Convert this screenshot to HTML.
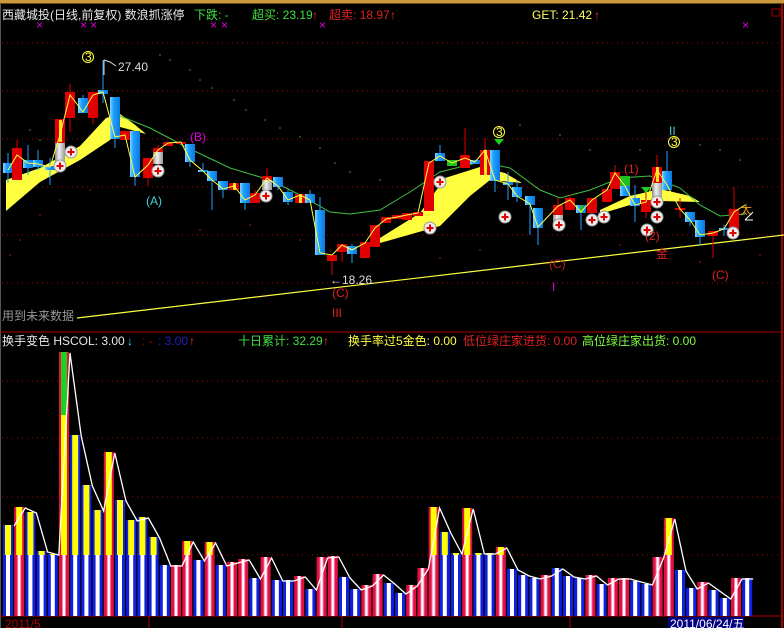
<!DOCTYPE html>
<html><head><meta charset="utf-8"><style>
html,body{margin:0;padding:0;background:#000;width:784px;height:628px;overflow:hidden}
svg{display:block}
text{font-family:"Liberation Sans","Noto Sans CJK SC",sans-serif;font-size:12px}
</style></head><body>
<svg width="784" height="628" viewBox="0 0 784 628" xmlns="http://www.w3.org/2000/svg">
<defs>
<linearGradient id="bl" x1="0" x2="1" y1="0" y2="0"><stop offset="0" stop-color="#7fd8ff"/><stop offset="0.35" stop-color="#1ea0ff"/><stop offset="1" stop-color="#0a78e0"/></linearGradient>
<linearGradient id="gr" x1="0" x2="1"><stop offset="0" stop-color="#888"/><stop offset="0.4" stop-color="#f0f0f0"/><stop offset="1" stop-color="#999"/></linearGradient>
</defs>
<rect width="784" height="628" fill="#000"/>
<rect x="0" y="0" width="784" height="3" fill="#c89a3c"/>
<rect x="0" y="3" width="784" height="1" fill="#6a4a10"/>
<line x1="782" y1="4" x2="782" y2="628" stroke="#a00000" stroke-width="2"/>
<line x1="0.5" y1="4" x2="0.5" y2="628" stroke="#555"/>
<g stroke="#b00000" stroke-width="1" stroke-dasharray="1,4">
<line x1="2" y1="43" x2="780" y2="43"/><line x1="2" y1="91" x2="780" y2="91"/><line x1="2" y1="139" x2="780" y2="139"/><line x1="2" y1="187" x2="780" y2="187"/><line x1="2" y1="235" x2="780" y2="235"/><line x1="2" y1="283" x2="780" y2="283"/>
<line x1="2" y1="381" x2="780" y2="381"/><line x1="2" y1="438" x2="780" y2="438"/><line x1="2" y1="497" x2="780" y2="497"/><line x1="2" y1="555" x2="780" y2="555"/>
</g>
<line x1="0" y1="332" x2="782" y2="332" stroke="#b00000"/>
<line x1="0" y1="616" x2="782" y2="616" stroke="#b00000"/>
<g stroke="#b00000"><line x1="149" y1="616" x2="149" y2="628"/><line x1="342" y1="616" x2="342" y2="628"/><line x1="570" y1="616" x2="570" y2="628"/></g>
<rect x="668" y="617" width="76" height="11" fill="#000080"/>
<text x="670" y="628" fill="#fff" font-size="11">2011/06/24/五</text>
<text x="5" y="628" fill="#b00000" font-size="11">2011/5</text>
<text x="2" y="19" fill="#e8e8e8">西藏城投(日线,前复权) 数浪抓涨停</text>
<text x="194" y="19" fill="#40e040">下跌: -</text>
<text x="252" y="19" fill="#40e040">超买: 23.19</text>
<text x="312" y="19" fill="#ff3030">↑</text>
<text x="329" y="19" fill="#e02020">超卖: 18.97</text>
<text x="390" y="19" fill="#ff3030">↑</text>
<text x="532" y="19" fill="#ffff60">GET: 21.42</text>
<text x="594" y="19" fill="#ff3030">↑</text>
<rect x="772" y="9" width="8" height="7" fill="none" stroke="#a00000"/>
<g fill="#e000e0" font-size="9"><text x="36" y="29">×</text><text x="80" y="29">×</text><text x="90" y="29">×</text><text x="210" y="29">×</text><text x="221" y="29">×</text><text x="319" y="29">×</text><text x="742" y="29">×</text></g>
<g fill="#ffff40">
<polygon points="6,180 40,168 80,146 106,118 120,114 134,124 146,134 120,127 110,140 80,160 40,182 6,211"/>
<polygon points="380,238 420,213 445,178 480,167 505,173 522,183 490,180 470,196 440,226 380,243"/>
<polygon points="600,210 630,196 660,189 690,196 700,202 660,201 630,205 600,214"/>
</g>
<line x1="77" y1="318" x2="784" y2="235" stroke="#ffff40" stroke-width="1.2"/>
<polyline fill="none" stroke="#40c040" stroke-width="1" points="120,116 150,128 188,148 230,168 270,180 300,195 330,212 350,214 380,210 410,192 440,172 480,162 510,168 540,190 560,198 590,190 620,178 650,176 680,188 700,205 720,216 745,214"/>
<g fill="#30a030"><circle cx="160" cy="55" r="0.8"/><circle cx="170" cy="60" r="0.8"/><circle cx="190" cy="70" r="0.8"/><circle cx="200" cy="80" r="0.8"/><circle cx="212" cy="88" r="0.8"/><circle cx="234" cy="100" r="0.8"/><circle cx="246" cy="110" r="0.8"/><circle cx="265" cy="120" r="0.8"/><circle cx="280" cy="128" r="0.8"/><circle cx="300" cy="137" r="0.8"/><circle cx="320" cy="148" r="0.8"/><circle cx="335" cy="163" r="0.8"/><circle cx="350" cy="172" r="0.8"/><circle cx="380" cy="180" r="0.8"/><circle cx="520" cy="125" r="0.8"/><circle cx="560" cy="135" r="0.8"/><circle cx="590" cy="150" r="0.8"/><circle cx="640" cy="150" r="0.8"/><circle cx="700" cy="145" r="0.8"/><circle cx="720" cy="150" r="0.8"/><circle cx="740" cy="160" r="0.8"/><circle cx="40" cy="140" r="0.8"/><circle cx="30" cy="130" r="0.8"/></g>
<g fill="#b02020"><circle cx="90" cy="190" r="0.8"/><circle cx="60" cy="200" r="0.8"/><circle cx="40" cy="215" r="0.8"/><circle cx="20" cy="240" r="0.8"/><circle cx="10" cy="255" r="0.8"/><circle cx="200" cy="230" r="0.8"/><circle cx="250" cy="225" r="0.8"/><circle cx="300" cy="240" r="0.8"/><circle cx="440" cy="258" r="0.8"/><circle cx="480" cy="250" r="0.8"/><circle cx="620" cy="245" r="0.8"/><circle cx="700" cy="262" r="0.8"/><circle cx="760" cy="255" r="0.8"/></g>
<g stroke-width="1">
<g stroke="#1ea0ff">
<line x1="8" y1="153" x2="8" y2="183"/><line x1="28" y1="145" x2="28" y2="175"/><line x1="38" y1="150" x2="38" y2="170"/><line x1="50" y1="158" x2="50" y2="185"/><line x1="83" y1="95" x2="83" y2="113"/><line x1="103" y1="60" x2="103" y2="103"/><line x1="115" y1="97" x2="115" y2="148"/><line x1="135" y1="131" x2="135" y2="186"/><line x1="190" y1="144" x2="190" y2="167"/><line x1="203" y1="163" x2="203" y2="172"/><line x1="212" y1="171" x2="212" y2="210"/><line x1="223" y1="181" x2="223" y2="198"/><line x1="245" y1="183" x2="245" y2="210"/><line x1="278" y1="177" x2="278" y2="190"/><line x1="288" y1="188" x2="288" y2="205"/><line x1="310" y1="190" x2="310" y2="203"/><line x1="320" y1="197" x2="320" y2="255"/><line x1="352" y1="244" x2="352" y2="263"/><line x1="440" y1="145" x2="440" y2="161"/><line x1="495" y1="150" x2="495" y2="192"/><line x1="508" y1="172" x2="508" y2="200"/><line x1="517" y1="180" x2="517" y2="202"/><line x1="530" y1="196" x2="530" y2="235"/><line x1="538" y1="208" x2="538" y2="245"/><line x1="581" y1="205" x2="581" y2="230"/><line x1="635" y1="185" x2="635" y2="222"/><line x1="667" y1="151" x2="667" y2="190"/><line x1="690" y1="212" x2="690" y2="226"/><line x1="700" y1="220" x2="700" y2="246"/><line x1="724" y1="225" x2="724" y2="236"/>
</g>
<g stroke="#e00000">
<line x1="17" y1="140" x2="17" y2="180"/><line x1="70" y1="84" x2="70" y2="132"/><line x1="93" y1="92" x2="93" y2="124"/><line x1="148" y1="158" x2="148" y2="186"/><line x1="158" y1="145" x2="158" y2="165"/><line x1="255" y1="190" x2="255" y2="203"/><line x1="267" y1="168" x2="267" y2="190"/><line x1="332" y1="255" x2="332" y2="275"/><line x1="342" y1="244" x2="342" y2="262"/><line x1="465" y1="128" x2="465" y2="168"/><line x1="485" y1="138" x2="485" y2="175"/><line x1="558" y1="198" x2="558" y2="229"/><line x1="570" y1="195" x2="570" y2="210"/><line x1="615" y1="165" x2="615" y2="189"/><line x1="646" y1="192" x2="646" y2="218"/><line x1="657" y1="155" x2="657" y2="197"/><line x1="680" y1="198" x2="680" y2="218"/><line x1="713" y1="231" x2="713" y2="258"/><line x1="734" y1="187" x2="734" y2="233"/>
</g>
</g>
<g fill="url(#bl)">
<rect x="3" y="163" width="10" height="10"/><rect x="23" y="160" width="10" height="8"/><rect x="33" y="160" width="10" height="7"/><rect x="45" y="166" width="10" height="4"/><rect x="78" y="98" width="10" height="15"/><rect x="98" y="90" width="10" height="4"/><rect x="110" y="97" width="10" height="42"/><rect x="130" y="131" width="10" height="46"/><rect x="185" y="144" width="10" height="18"/><rect x="198" y="170" width="10" height="2"/><rect x="207" y="171" width="10" height="10"/><rect x="218" y="181" width="10" height="9"/><rect x="240" y="183" width="10" height="20"/><rect x="273" y="177" width="10" height="10"/><rect x="283" y="192" width="10" height="10"/><rect x="305" y="194" width="10" height="9"/><rect x="315" y="210" width="10" height="45"/><rect x="347" y="246" width="10" height="8"/><rect x="435" y="153" width="10" height="8"/><rect x="470" y="160" width="10" height="4"/><rect x="490" y="150" width="10" height="31"/><rect x="503" y="182" width="10" height="3"/><rect x="512" y="187" width="10" height="10"/><rect x="525" y="196" width="10" height="9"/><rect x="533" y="208" width="10" height="20"/><rect x="576" y="205" width="10" height="8"/><rect x="620" y="186" width="10" height="10"/><rect x="630" y="198" width="10" height="8"/><rect x="662" y="171" width="10" height="19"/><rect x="685" y="212" width="10" height="10"/><rect x="695" y="220" width="10" height="17"/><rect x="719" y="228" width="10" height="2"/>
</g>
<g fill="#e00000">
<rect x="12" y="148" width="10" height="32"/><rect x="55" y="119" width="10" height="44"/><rect x="65" y="92" width="10" height="26"/><rect x="88" y="92" width="10" height="26"/><rect x="120" y="131" width="10" height="9"/><rect x="143" y="158" width="10" height="20"/><rect x="153" y="148" width="10" height="12"/><rect x="163" y="142" width="10" height="4"/><rect x="176" y="142" width="10" height="2"/><rect x="229" y="183" width="10" height="7"/><rect x="250" y="193" width="10" height="10"/><rect x="262" y="176" width="10" height="12"/><rect x="295" y="194" width="10" height="9"/><rect x="327" y="255" width="10" height="6"/><rect x="337" y="244" width="10" height="8"/><rect x="360" y="242" width="10" height="16"/><rect x="370" y="225" width="10" height="22"/><rect x="381" y="217" width="10" height="6"/><rect x="392" y="215" width="10" height="4"/><rect x="402" y="213" width="10" height="7"/><rect x="413" y="212" width="10" height="4"/><rect x="424" y="161" width="10" height="50"/><rect x="460" y="155" width="10" height="13"/><rect x="480" y="150" width="10" height="25"/><rect x="553" y="205" width="10" height="12"/><rect x="565" y="198" width="10" height="12"/><rect x="587" y="198" width="10" height="15"/><rect x="602" y="189" width="10" height="13"/><rect x="610" y="172" width="10" height="17"/><rect x="641" y="200" width="10" height="12"/><rect x="652" y="167" width="10" height="16"/><rect x="675" y="208" width="10" height="2"/><rect x="708" y="231" width="10" height="5"/><rect x="729" y="209" width="10" height="24"/>
</g>
<g fill="url(#gr)"><rect x="55" y="143" width="10" height="22"/><rect x="153" y="152" width="10" height="12"/><rect x="262" y="180" width="10" height="10"/><rect x="553" y="215" width="10" height="14"/><rect x="652" y="183" width="10" height="14"/></g>
<g fill="#ffe020"><rect x="59" y="120" width="3" height="22"/><rect x="233" y="183" width="3" height="7"/><rect x="299" y="194" width="3" height="9"/><rect x="484" y="150" width="3" height="25"/><rect x="656" y="167" width="3" height="15"/></g>
<g fill="#20c020"><rect x="620" y="176" width="10" height="10"/><rect x="447" y="160" width="10" height="6"/><rect x="580" y="205" width="3" height="8"/></g>
<polyline fill="none" stroke="#ffff40" stroke-width="1" points="8,170 17,155 28,163 38,164 50,167 60,135 70,95 83,112 93,95 103,92 115,137 125,135 135,177 148,165 158,150 168,143 181,142 190,160 203,171 212,180 223,189 234,186 245,200 255,195 267,178 278,186 288,200 300,195 310,200 320,253 332,255 342,245 352,250 365,243 375,228 386,219 397,217 407,215 418,213 429,163 440,156 452,163 465,158 475,162 485,150 495,180 508,184 517,196 530,204 538,227 558,206 570,200 581,212 592,200 607,190 615,173 625,186 635,205 646,202 657,170 667,185 680,209 690,220 700,235 713,233 724,229 734,212 745,205"/>
<g>
<g transform="translate(60,166)"><circle r="6" fill="#eee" stroke="#999"/><path d="M-3.5,0H3.5M0,-3.5V3.5" stroke="#e00000" stroke-width="2"/></g>
<g transform="translate(71,152)"><circle r="6" fill="#eee" stroke="#999"/><path d="M-3.5,0H3.5M0,-3.5V3.5" stroke="#e00000" stroke-width="2"/></g>
<g transform="translate(158,171)"><circle r="6" fill="#eee" stroke="#999"/><path d="M-3.5,0H3.5M0,-3.5V3.5" stroke="#e00000" stroke-width="2"/></g>
<g transform="translate(266,196)"><circle r="6" fill="#eee" stroke="#999"/><path d="M-3.5,0H3.5M0,-3.5V3.5" stroke="#e00000" stroke-width="2"/></g>
<g transform="translate(430,228)"><circle r="6" fill="#eee" stroke="#999"/><path d="M-3.5,0H3.5M0,-3.5V3.5" stroke="#e00000" stroke-width="2"/></g>
<g transform="translate(440,182)"><circle r="6" fill="#eee" stroke="#999"/><path d="M-3.5,0H3.5M0,-3.5V3.5" stroke="#e00000" stroke-width="2"/></g>
<g transform="translate(505,217)"><circle r="6" fill="#eee" stroke="#999"/><path d="M-3.5,0H3.5M0,-3.5V3.5" stroke="#e00000" stroke-width="2"/></g>
<g transform="translate(559,225)"><circle r="6" fill="#eee" stroke="#999"/><path d="M-3.5,0H3.5M0,-3.5V3.5" stroke="#e00000" stroke-width="2"/></g>
<g transform="translate(592,220)"><circle r="6" fill="#eee" stroke="#999"/><path d="M-3.5,0H3.5M0,-3.5V3.5" stroke="#e00000" stroke-width="2"/></g>
<g transform="translate(604,217)"><circle r="6" fill="#eee" stroke="#999"/><path d="M-3.5,0H3.5M0,-3.5V3.5" stroke="#e00000" stroke-width="2"/></g>
<g transform="translate(647,230)"><circle r="6" fill="#eee" stroke="#999"/><path d="M-3.5,0H3.5M0,-3.5V3.5" stroke="#e00000" stroke-width="2"/></g>
<g transform="translate(657,217)"><circle r="6" fill="#eee" stroke="#999"/><path d="M-3.5,0H3.5M0,-3.5V3.5" stroke="#e00000" stroke-width="2"/></g>
<g transform="translate(657,202)"><circle r="6" fill="#eee" stroke="#999"/><path d="M-3.5,0H3.5M0,-3.5V3.5" stroke="#e00000" stroke-width="2"/></g>
<g transform="translate(733,233)"><circle r="6" fill="#eee" stroke="#999"/><path d="M-3.5,0H3.5M0,-3.5V3.5" stroke="#e00000" stroke-width="2"/></g>
</g>
<circle cx="88" cy="57" r="5.5" fill="none" stroke="#ffff40"/><text x="85" y="61" fill="#ffff40" font-size="9">3</text>
<path d="M104,60 L104,75 M104,60 L110,62 L116,66" stroke="#ddd" fill="none"/>
<text x="118" y="71" fill="#ddd">27.40</text>
<text x="190" y="141" fill="#e000e0">(B)</text>
<text x="146" y="205" fill="#40d0e0">(A)</text>
<text x="330" y="284" fill="#ddd">←18.26</text>
<text x="332" y="297" fill="#e02020">(C)</text>
<text x="332" y="317" fill="#e02020">III</text>
<text x="2" y="320" fill="#999">用到未来数据</text>
<text x="549" y="268" fill="#c02020">(C)</text>
<text x="552" y="291" fill="#e000e0">I</text>
<circle cx="499" cy="132" r="5.5" fill="none" stroke="#ffff40"/><text x="496" y="136" fill="#ffff40" font-size="9">3</text>
<path d="M494,139 h10 l-5,6z" fill="#20d020"/>
<text x="669" y="135" fill="#40d0e0">II</text>
<circle cx="674" cy="142" r="5.5" fill="none" stroke="#ffff40"/><text x="671" y="146" fill="#ffff40" font-size="9">3</text>
<text x="624" y="173" fill="#e02020">(1)</text>
<path d="M641,187 h10 l-5,6z" fill="#20d020"/>
<text x="645" y="240" fill="#e02020">(2)</text>
<text x="656" y="258" fill="#e02020">金</text>
<text x="712" y="279" fill="#e02020">(C)</text>
<text x="740" y="214" fill="#f0a020" font-size="14">太</text>
<path d="M745,220 L753,212 M745,220 H753" stroke="#fff"/>
<text x="2" y="345" fill="#e8e8e8">换手变色 HSCOL: 3.00</text>
<text x="127" y="345" fill="#40d0ff">↓</text>
<text x="142" y="345" fill="#a00000">: -</text>
<text x="158" y="345" fill="#2020c0">: 3.00</text>
<text x="189" y="345" fill="#ff3030">↑</text>
<text x="238" y="345" fill="#40e040">十日累计: 32.29</text>
<text x="323" y="345" fill="#ff3030">↑</text>
<text x="348" y="345" fill="#ffff40">换手率过5金色: 0.00</text>
<text x="463" y="345" fill="#e02020">低位绿庄家进货: 0.00</text>
<text x="582" y="345" fill="#80ff40">高位绿庄家出货: 0.00</text>
<g id="vb"></g>
</svg>
<script>
var d=[[525,'B'],[507,'R'],[512,'B'],[551,'B'],[554,'B'],[352,'R'],[435,'B'],[485,'B'],[510,'B'],[452,'R'],[500,'B'],[520,'B'],[517,'B'],[537,'B'],[565,'B'],[565,'R'],[541,'R'],[560,'B'],[542,'R'],[565,'B'],[562,'R'],[559,'R'],[578,'B'],[557,'R'],[580,'B'],[580,'B'],[576,'R'],[589,'B'],[557,'R'],[556,'R'],[577,'B'],[589,'B'],[585,'R'],[574,'R'],[583,'B'],[593,'B'],[585,'R'],[568,'R'],[507,'R'],[532,'B'],[553,'B'],[508,'R'],[553,'B'],[553,'B'],[547,'R'],[569,'B'],[575,'B'],[578,'B'],[575,'R'],[568,'B'],[576,'B'],[578,'B'],[575,'R'],[584,'B'],[578,'R'],[578,'R'],[581,'B'],[584,'B'],[557,'R'],[518,'R'],[570,'B'],[588,'B'],[582,'R'],[590,'B'],[598,'B'],[578,'R'],[578,'B']];
var s='',pts=[];
for(var i=0;i<d.length;i++){var x=3+i*11.2,t=d[i][0],r=d[i][1]=='R';
var edge=r?'#e01040':'#1020e0',mid=r?'#ff80b0':'#ffffff';
s+='<rect x="'+x+'" y="'+t+'" width="10" height="'+(616-t)+'" fill="'+edge+'"/>';
var mt=Math.max(t,555);
s+='<rect x="'+(x+3)+'" y="'+mt+'" width="4" height="'+(616-mt)+'" fill="'+mid+'"/>';
if(r) s+='<rect x="'+(x+4)+'" y="'+mt+'" width="2" height="'+(616-mt)+'" fill="#fff"/>';
if(t<555){s+='<rect x="'+(x+2)+'" y="'+t+'" width="6" height="'+(555-t)+'" fill="#ffff00"/>';}
if(i==5){s+='<rect x="'+(x+2)+'" y="352" width="6" height="63" fill="#20d020"/>';}
pts.push((x+11)+','+(t+1));}
s+='<polyline fill="none" stroke="#fff" stroke-width="1.3" points="'+pts.join(' ')+'"/>';
document.getElementById('vb').innerHTML=s;
</script>
</body></html>
